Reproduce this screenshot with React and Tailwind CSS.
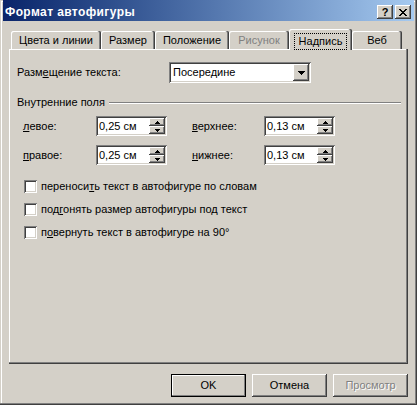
import React from 'react';

// classic 3D edges
const raised =
  'shadow-[inset_-1px_-1px_#404040,inset_1px_1px_#ffffff,inset_-2px_-2px_#808080,inset_2px_2px_#d4d0c8]';
const sunken =
  'shadow-[inset_1px_1px_#808080,inset_-1px_-1px_#ffffff,inset_2px_2px_#404040,inset_-2px_-2px_#d4d0c8]';
const frame =
  'shadow-[inset_-1px_-1px_#404040,inset_-2px_-2px_#808080,inset_1px_1px_#d4d0c8,inset_2px_2px_#ffffff]';
const panel =
  'shadow-[inset_-1px_-1px_#404040,inset_-2px_-2px_#808080,inset_1px_1px_#ffffff]';
const tabEdge =
  'shadow-[inset_-1px_0_#404040,inset_-2px_0_#808080,inset_1px_1px_#ffffff]';

const UpArrow = () => (
  <svg width="5" height="3" className="block">
    <path d="M2 0H3V1H4V2H5V3H0V2H1V1H2Z" fill="#000" />
  </svg>
);

const DownArrow = ({ w = 5 }) =>
  w === 7 ? (
    <svg width="7" height="4" className="block">
      <path d="M0 0H7V1H6V2H5V3H4V4H3V3H2V2H1V1H0Z" fill="#000" />
    </svg>
  ) : (
    <svg width="5" height="3" className="block">
      <path d="M0 0H5V1H4V2H3V3H2V2H1V1H0Z" fill="#000" />
    </svg>
  );

const CloseGlyph = () => (
  <svg width="8" height="7" className="block">
    <path
      d="M0 0H2V1H0ZM6 0H8V1H6ZM1 1H3V2H1ZM5 1H7V2H5ZM2 2H6V3H2ZM3 3H5V4H3ZM2 4H6V5H2ZM1 5H3V6H1ZM5 5H7V6H5ZM0 6H2V7H0ZM6 6H8V7H6Z"
      fill="#000"
    />
  </svg>
);

const Spin = ({ value }) => (
  <div className={`flex h-[20px] w-[71px] bg-white p-[2px] ${sunken}`}>
    <div className="flex-1 pl-[1px] leading-[16px]">{value}</div>
    <div className="flex w-[16px] flex-col">
      <div className={`flex h-[8px] items-center justify-center bg-[#d4d0c8] ${raised}`}>
        <UpArrow />
      </div>
      <div className={`flex h-[8px] items-center justify-center bg-[#d4d0c8] ${raised}`}>
        <DownArrow />
      </div>
    </div>
  </div>
);

const Check = ({ children }) => (
  <div className="flex h-[13px] items-center">
    <span className={`h-[13px] w-[13px] bg-white ${sunken}`} />
    <span className="ml-[4px]">{children}</span>
  </div>
);

const tabs = [
  { label: 'Цвета и линии', w: 'w-[90px]' },
  { label: 'Размер', w: 'w-[54px]' },
  { label: 'Положение', w: 'w-[74px]' },
  { label: 'Рисунок', w: 'w-[60px]', disabled: true },
  { label: 'Надпись', w: 'w-[63px]', active: true },
  { label: 'Веб', w: 'w-[50px]' },
];

export default function App() {
  return (
    <div
      className={`flex h-[405px] w-[417px] flex-col bg-[#d4d0c8] px-[3px] font-['Liberation_Sans',Arial,sans-serif] text-[11px] leading-[13px] text-black ${frame}`}
    >
      {/* title bar */}
      <div className="flex h-[21px] items-center bg-linear-to-r from-[#0a246a] to-[#a6caf0] pl-[2px] pr-[3px] pt-[3px]">
        <span className="flex-1 text-[12px] font-bold tracking-[0.4px] text-white">Формат автофигуры</span>
        <div className="flex gap-[2px]">
          <div className={`flex h-[14px] w-[16px] items-center justify-center bg-[#d4d0c8] text-[11px] font-bold ${raised}`}>
            ?
          </div>
          <div className={`flex h-[14px] w-[16px] items-center justify-center bg-[#d4d0c8] ${raised}`}>
            <CloseGlyph />
          </div>
        </div>
      </div>

      <div className="px-[6px] pt-[8px]">
        {/* tabs */}
        <div className="flex h-[20px] items-end pl-[2px]">
          {tabs.map((t) =>
            t.active ? (
              <div
                key={t.label}
                className={`relative z-10 -mb-[1px] flex h-[21px] items-start justify-center rounded-t-[2px] bg-[#d4d0c8] pt-[4px] ${t.w} ${tabEdge}`}
              >
                <span className="border border-dotted border-black px-[4px] py-[1px]">{t.label}</span>
              </div>
            ) : (
              <div
                key={t.label}
                className={`flex h-[18px] items-center justify-center rounded-t-[2px] ${t.w} ${tabEdge} ${
                  t.disabled ? 'text-[#808080]' : ''
                }`}
              >
                {t.label}
              </div>
            )
          )}
        </div>

        {/* panel */}
        <div className={`h-[315px] pl-[8px] pr-[7px] pt-[13px] ${panel}`}>
          <div className="flex h-[21px] items-center">
            <span className="w-[152px]">
              Разм<span className="underline">е</span>щение текста:
            </span>
            <div className={`flex h-[21px] w-[142px] bg-white p-[2px] ${sunken}`}>
              <span className="flex-1 pl-[2px] leading-[17px]">Посередине</span>
              <div className={`flex h-[17px] w-[16px] items-center justify-center bg-[#d4d0c8] ${raised}`}>
                <DownArrow w={7} />
              </div>
            </div>
          </div>

          <div className="mt-[13px] flex h-[13px] items-center">
            <span>Внутренние поля</span>
            <div className="ml-[4px] h-0 flex-1 border-t border-b border-t-[#808080] border-b-white" />
          </div>

          <div className="mt-[7px] flex h-[20px] items-center pl-[6px]">
            <span className="w-[73px]">
              <span className="underline">л</span>евое:
            </span>
            <Spin value="0,25 см" />
            <span className="ml-[25px] w-[72px]">
              <span className="underline">в</span>ерхнее:
            </span>
            <Spin value="0,13 см" />
          </div>

          <div className="mt-[9px] flex h-[20px] items-center pl-[6px]">
            <span className="w-[73px]">
              <span className="underline">п</span>равое:
            </span>
            <Spin value="0,25 см" />
            <span className="ml-[25px] w-[72px]">
              <span className="underline">н</span>ижнее:
            </span>
            <Spin value="0,13 см" />
          </div>

          <div className="mt-[15px] flex flex-col gap-[10px] pl-[7px]">
            <Check>
              переноси<span className="underline">т</span>ь текст в автофигуре по словам
            </Check>
            <Check>
              под<span className="underline">г</span>онять размер автофигуры под текст
            </Check>
            <Check>
              п<span className="underline">о</span>вернуть текст в автофигуре на 90°
            </Check>
          </div>
        </div>
      </div>

      {/* buttons */}
      <div className="mt-[10px] flex justify-end gap-[6px] px-[6px]">
        <div className="flex h-[23px] w-[75px] items-center justify-center border border-black shadow-[inset_-1px_-1px_#808080,inset_1px_1px_#ffffff]">
          OK
        </div>
        <div className={`flex h-[23px] w-[75px] items-center justify-center ${raised}`}>Отмена</div>
        <div
          className={`flex h-[23px] w-[75px] items-center justify-center text-[#808080] [text-shadow:1px_1px_0_#ffffff] ${raised}`}
        >
          Просмотр
        </div>
      </div>
    </div>
  );
}
